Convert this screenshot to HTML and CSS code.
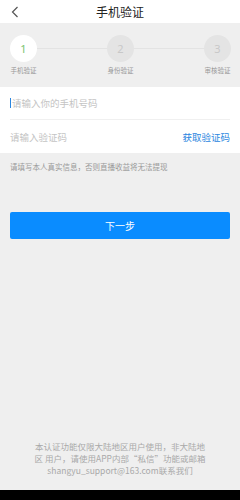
FILE: index.html
```html
<!DOCTYPE html>
<html>
<head>
<meta charset="utf-8">
<link rel="stylesheet" href="styles.css">
</head>
<body>
<div class="page">
  <div class="header">
    <svg class="back" width="8" height="12" viewBox="0 0 8 12"><path d="M6.5 1 L1.5 6 L6.5 11" fill="none" stroke="#555" stroke-width="1.2"/></svg>
    <div class="title">手机验证</div>
  </div>
  <div class="steps">
    <div class="step">
      <div class="circle active">1</div>
      <div class="label">手机验证</div>
    </div>
    <div class="line"></div>
    <div class="step">
      <div class="circle">2</div>
      <div class="label">身份验证</div>
    </div>
    <div class="line"></div>
    <div class="step">
      <div class="circle">3</div>
      <div class="label">审核验证</div>
    </div>
  </div>
  <div class="form">
    <div class="row first"><span class="cursor"></span><span class="ph">请输入你的手机号码</span></div>
    <div class="row"><span class="ph">请输入验证码</span><span class="get">获取验证码</span></div>
  </div>
  <div class="notice">请填写本人真实信息，否则直播收益将无法提现</div>
  <div class="btn">下一步</div>
  <div class="spacer"></div>
  <div class="footer">本认证功能仅限大陆地区用户使用，非大陆地区 用户，请使用APP内部“私信”功能或邮箱shangyu_support@163.com联系我们</div>
  <div class="navbar"></div>
</div>
</body>
</html>
```
FILE: styles.css
```css
html, body {
  margin: 0;
  padding: 0;
}
body {
  font-family: "Noto Sans CJK SC", "Noto Sans", sans-serif;
  background: #efefef;
}
.page {
  height: 500px;
  display: flex;
  flex-direction: column;
}
.header {
  height: 23px;
  background: #fff;
  display: flex;
  align-items: center;
  justify-content: center;
  position: relative;
}
.back {
  position: absolute;
  left: 11px;
  top: 6px;
}
.title {
  font-size: 12px;
  color: #222;
  line-height: 14px;
}
.steps {
  height: 64px;
  box-sizing: border-box;
  padding: 12px 9px 0 10px;
  display: flex;
  align-items: flex-start;
}
.step {
  width: 27px;
  display: flex;
  flex-direction: column;
  align-items: center;
}
.circle {
  width: 27px;
  height: 27px;
  border-radius: 50%;
  background: #e4e4e4;
  color: #c8c8c8;
  font-family: "Noto Sans", sans-serif;
  font-size: 11px;
  line-height: 27px;
  text-align: center;
}
.circle.active {
  background: #fff;
  color: #7cc36f;
}
.label {
  margin-top: 4px;
  font-size: 6.5px;
  line-height: 8px;
  white-space: nowrap;
  color: #999;
}
.line {
  flex: 1;
  height: 1px;
  background: #e3e3e3;
  margin-top: 13px;
}
.form {
  background: #fff;
  padding: 0 10px;
}
.row {
  height: 33px;
  display: flex;
  align-items: center;
  font-size: 9.5px;
}
.row.first {
  height: 32px;
  border-bottom: 1px solid #f0f0f0;
}
.cursor {
  width: 1px;
  height: 10px;
  background: #2a86e0;
  margin-right: 1px;
}
.ph {
  color: #c4c4c4;
  flex: 1;
}
.get {
  color: #2a86e0;
}
.notice {
  padding: 8px 10px 0;
  font-size: 7.5px;
  line-height: 12px;
  color: #999;
}
.btn {
  margin: 39px 10px 0;
  height: 27px;
  border-radius: 2px;
  background: #0a8cff;
  color: #fff;
  font-size: 10px;
  display: flex;
  align-items: center;
  justify-content: center;
}
.spacer {
  flex: 1;
}
.footer {
  padding: 0 33px;
  font-size: 8.5px;
  line-height: 12px;
  color: #a9a9a9;
  text-align: center;
  margin-bottom: 14px;
  word-break: break-all;
}
.navbar {
  height: 10px;
  background: #000;
}
```
